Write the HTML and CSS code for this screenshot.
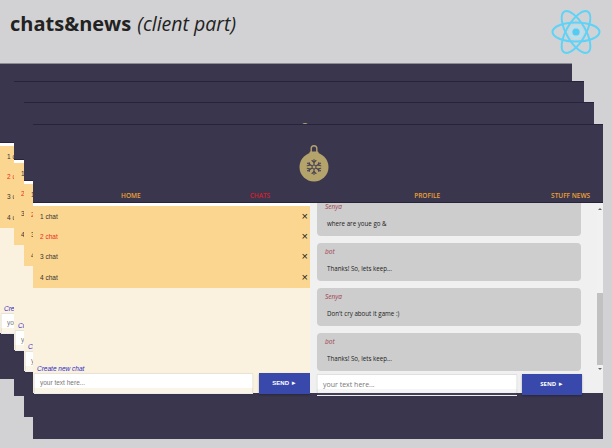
FILE: index.html
```html
<!DOCTYPE html>
<html lang="en">
<head>
<meta charset="utf-8">
<title>chats&amp;news</title>
<link rel="stylesheet" href="styles.css">
</head>
<body>
<svg class="defs" width="0" height="0" aria-hidden="true">
  <symbol id="ornament" viewBox="0 0 30 39">
    <path d="M12.2 10V5.6a2.8 2.8 0 0 1 5.6 0V10" fill="none" stroke="#b5a36c" stroke-width="1.4"/>
    <rect x="10.5" y="8.5" width="9" height="3" rx="1" fill="#b5a36c"/>
    <circle cx="15" cy="24" r="14.5" fill="#b5a36c"/>
    <g stroke="#4a4454" stroke-width="1.1" fill="none" stroke-linecap="round">
      <path d="M15 16.5v15M8.5 20.2l13 7.6M21.5 20.2l-13 7.6"/>
      <path d="M13 17.5l2 2 2-2M13 30.5l2-2 2 2M8.2 22.8l2.8-.6-.9-2.7M21.8 25.2l-2.8.6.9 2.7M21.8 22.8l-2.8-.6.9-2.7M8.2 25.2l2.8.6-.9 2.7"/>
    </g>
    <circle cx="15" cy="24" r="2" fill="#b5a36c" stroke="#4a4454"/>
  </symbol>
  <symbol id="react" viewBox="0 0 50 48">
    <g fill="none" stroke="#5fd3f7" stroke-width="2">
      <ellipse cx="25" cy="24" rx="23.5" ry="9.5"/>
      <ellipse cx="25" cy="24" rx="23.5" ry="9.5" transform="rotate(60 25 24)"/>
      <ellipse cx="25" cy="24" rx="23.5" ry="9.5" transform="rotate(120 25 24)"/>
      <circle cx="25" cy="24" r="6" stroke="#a8e6fa"/>
    </g>
    <circle cx="25" cy="24" r="3.6" fill="#4fcdf7"/>
  </symbol>
</svg>

<header class="page-head">
  <h1 class="title">chats&amp;news <em class="subtitle">(client part)</em></h1>
  <svg class="react-logo"><use href="#react"/></svg>
</header>

<main class="desktop">
  <section class="window win-1">
    <div class="win-head">
      <svg class="ornament"><use href="#ornament"/></svg>
      <nav class="nav"><a class="nav-home">HOME</a><a class="nav-chats">CHATS</a><a class="nav-profile">PROFILE</a><a class="nav-news">STUFF NEWS</a></nav>
    </div>
    <div class="win-main">
      <div class="chats">
        <ul class="chat-list">
          <li class="chat-row"><span>1 chat</span><b class="close">×</b></li>
          <li class="chat-row active"><span>2 chat</span><b class="close">×</b></li>
          <li class="chat-row"><span>3 chat</span><b class="close">×</b></li>
          <li class="chat-row"><span>4 chat</span><b class="close">×</b></li>
        </ul>
        <label class="new-label">Create new chat</label>
        <div class="form"><div class="field">your text here...</div><div class="send">SEND ►</div></div>
      </div>
    </div>
    <div class="win-foot"></div>
  </section>

  <section class="window win-2">
    <div class="win-head">
      <svg class="ornament"><use href="#ornament"/></svg>
      <nav class="nav"><a class="nav-home">HOME</a><a class="nav-chats">CHATS</a><a class="nav-profile">PROFILE</a><a class="nav-news">STUFF NEWS</a></nav>
    </div>
    <div class="win-main">
      <div class="chats">
        <ul class="chat-list">
          <li class="chat-row"><span>1 chat</span><b class="close">×</b></li>
          <li class="chat-row active"><span>2 chat</span><b class="close">×</b></li>
          <li class="chat-row"><span>3 chat</span><b class="close">×</b></li>
          <li class="chat-row"><span>4 chat</span><b class="close">×</b></li>
        </ul>
        <label class="new-label">Create new chat</label>
        <div class="form"><div class="field">your text here...</div><div class="send">SEND ►</div></div>
      </div>
    </div>
    <div class="win-foot"></div>
  </section>

  <section class="window win-3">
    <div class="win-head">
      <svg class="ornament"><use href="#ornament"/></svg>
      <nav class="nav"><a class="nav-home">HOME</a><a class="nav-chats">CHATS</a><a class="nav-profile">PROFILE</a><a class="nav-news">STUFF NEWS</a></nav>
    </div>
    <div class="win-main">
      <div class="chats">
        <ul class="chat-list">
          <li class="chat-row"><span>1 chat</span><b class="close">×</b></li>
          <li class="chat-row active"><span>2 chat</span><b class="close">×</b></li>
          <li class="chat-row"><span>3 chat</span><b class="close">×</b></li>
          <li class="chat-row"><span>4 chat</span><b class="close">×</b></li>
        </ul>
        <label class="new-label">Create new chat</label>
        <div class="form"><div class="field">your text here...</div><div class="send">SEND ►</div></div>
      </div>
    </div>
    <div class="win-foot"></div>
  </section>

  <section class="window win-4">
    <div class="win-head">
      <svg class="ornament"><use href="#ornament"/></svg>
      <nav class="nav"><a class="nav-home">HOME</a><a class="nav-chats">CHATS</a><a class="nav-profile">PROFILE</a><a class="nav-news">STUFF NEWS</a></nav>
    </div>
    <div class="win-main">
      <div class="chats">
        <ul class="chat-list">
          <li class="chat-row"><span>1 chat</span><b class="close">×</b></li>
          <li class="chat-row active"><span>2 chat</span><b class="close">×</b></li>
          <li class="chat-row"><span>3 chat</span><b class="close">×</b></li>
          <li class="chat-row"><span>4 chat</span><b class="close">×</b></li>
        </ul>
        <label class="new-label">Create new chat</label>
        <div class="form"><div class="field">your text here...</div><div class="send">SEND ►</div></div>
      </div>
      <div class="thread">
        <div class="messages">
          <article class="bubble"><h3 class="author">Senya</h3><p class="text">where are youe go &amp;</p></article>
          <article class="bubble"><h3 class="author">bot</h3><p class="text">Thanks! So, lets keep...</p></article>
          <article class="bubble"><h3 class="author">Senya</h3><p class="text">Don't cry about it game :)</p></article>
          <article class="bubble"><h3 class="author">bot</h3><p class="text">Thanks! So, lets keep...</p></article>
        </div>
        <div class="form thread-form"><div class="field">your text here...</div><div class="send">SEND ►</div></div>
        <div class="scrollbar"><i class="arrow-up"></i><i class="thumb"></i><i class="arrow-down"></i></div>
      </div>
    </div>
    <div class="win-foot"></div>
  </section>
</main>
</body>
</html>
```

FILE: styles.css
```css
* { box-sizing: border-box; }
html, body { margin: 0; padding: 0; height: 100%; }
body {
  width: 612px;
  height: 448px;
  overflow: hidden;
  background: #d2d2d4;
  font-family: "Open Sans", sans-serif;
  color: #222;
}
.defs { position: absolute; }

.page-head {
  height: 63px;
  padding: 9px 0 0 10px;
  position: relative;
}
.title {
  margin: 0;
  font-size: 20px;
  line-height: 30px;
  font-weight: 700;
  color: #222;
}
.subtitle {
  font-weight: 400;
  font-size: 19.5px;
  font-style: italic;
  margin-left: 1px;
}
.react-logo {
  position: absolute;
  left: 551px;
  top: 8px;
  width: 50px;
  height: 48px;
}

.desktop { position: relative; height: 385px; }
.window {
  position: absolute;
  width: 570px;
  height: 315px;
  display: flex;
  flex-direction: column;
  background: #3a364e;
}
.win-1 { left: 0; top: 1px; width: 572px; box-shadow: 0 -1px 0 #8d8b96; }
.win-2 { left: 14px; top: 18px; }
.win-3 { left: 24px; top: 39px; }
.win-4 { left: 33px; top: 61px; }

.win-head {
  height: 79px;
  flex: none;
  position: relative;
  background: #3a364e;
  border-top: 1px solid #26233a;
  border-bottom: 1px solid #26233a;
}
.win-1 .win-head { border-top-color: #3a364e; }
.ornament {
  position: absolute;
  left: 266px;
  top: 18px;
  width: 30px;
  height: 39px;
}
.nav {
  position: absolute;
  left: 0;
  right: 0;
  bottom: 1px;
  display: flex;
  font-size: 6.5px;
  font-weight: 600;
  line-height: 10px;
  color: #f0a232;
}
.nav-home { margin-left: 88px; }
.nav-chats { margin-left: 109px; color: #d81f2a; }
.nav-profile { margin-left: 144px; }
.nav-news { margin-left: 111px; }

.win-main {
  height: 190px;
  flex: none;
  display: flex;
  background: #faf1df;
}
.chats {
  width: 277px;
  flex: none;
  position: relative;
  background: #faf1df;
  border-top: 3px solid #fff;
  font-family: "Liberation Sans", sans-serif;
}
.chat-list { margin: 0; padding: 0; list-style: none; }
.chat-row {
  height: 20.4px;
  display: flex;
  align-items: center;
  justify-content: space-between;
  padding: 0 2px 0 7px;
  background: #fbd690;
  font-size: 6.5px;
  color: #333;
}
.chat-row.active { color: #ee2a1e; }
.close { font-size: 11px; font-weight: 400; color: #222; line-height: 1; }

.new-label {
  position: absolute;
  left: 4px;
  top: 158.5px;
  font-size: 6.5px;
  line-height: 8px;
  font-style: italic;
  color: #2b2bc4;
}
.form {
  position: absolute;
  left: 1px;
  top: 167px;
  display: flex;
  gap: 6px;
}
.field {
  width: 219px;
  height: 21px;
  padding-left: 5px;
  font-size: 6.5px;
  line-height: 18px;
  color: #777;
  background: linear-gradient(#fff 75%, rgba(255, 255, 255, .25) 75%);
  border: 1px solid rgba(0, 0, 0, .07);
  box-shadow: 0 1px 2px rgba(0, 0, 0, .08);
}
.send {
  width: 51px;
  height: 21px;
  font-size: 6px;
  font-weight: 700;
  line-height: 20px;
  text-align: center;
  color: #fff;
  background: #3949ab;
  box-shadow: 0 1px 2px rgba(0, 0, 0, .3);
}

.thread {
  flex: 1;
  position: relative;
  background: #f0f0f0;
  display: flex;
  font-family: "Open Sans", sans-serif;
}
.messages {
  width: 271px;
  height: 168px;
  padding-left: 7px;
  overflow: hidden;
  display: flex;
  flex-direction: column;
  justify-content: flex-end;
  gap: 7px;
}
.bubble {
  flex: none;
  width: 264px;
  height: 38px;
  padding: 4px 8px;
  border-radius: 4px;
  background: #cdcdcd;
}
.author {
  margin: 0;
  font-size: 6.5px;
  line-height: 9px;
  font-weight: 400;
  font-style: italic;
  color: #a0404e;
}
.text {
  margin: 8px 0 0 2px;
  font-size: 6.2px;
  line-height: 10px;
  color: #222;
}
.thread-form { left: 7px; top: 171px; gap: 5px; }
.thread-form .field {
  width: 200px;
  height: 22px;
  font-size: 7px;
  line-height: 20px;
  background: linear-gradient(#fff 70%, rgba(255, 255, 255, .35) 70%, rgba(255, 255, 255, .35) 85%, rgba(255, 255, 255, .04) 85%);
}
.thread-form .send { width: 60px; }

.scrollbar {
  position: absolute;
  right: 0;
  top: 0;
  width: 6px;
  height: 170px;
  background: #f1f1f1;
}
.thumb {
  position: absolute;
  left: 0;
  top: 90px;
  width: 6px;
  height: 72px;
  background: #c1c1c1;
}
.arrow-up, .arrow-down {
  position: absolute;
  left: 1px;
  width: 0;
  height: 0;
  border-left: 2px solid transparent;
  border-right: 2px solid transparent;
}
.arrow-up { top: 5px; border-bottom: 2px solid #666; }
.arrow-down { top: 165px; border-top: 2px solid #666; }

.win-foot { flex: 1; background: #3a364e; }
```
